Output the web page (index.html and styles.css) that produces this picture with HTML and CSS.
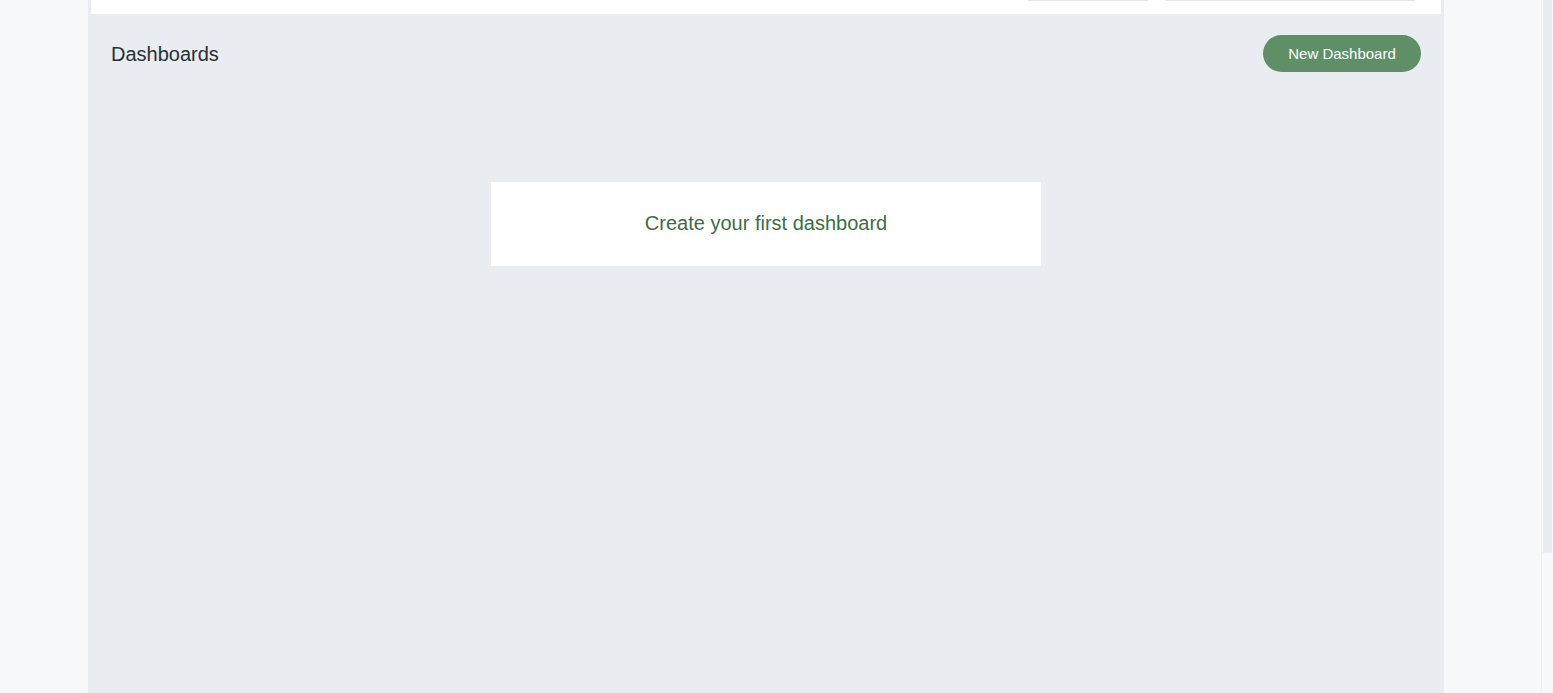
FILE: index.html
```html
<!DOCTYPE html>
<html lang="en">
<head>
  <meta charset="UTF-8">
  <meta name="viewport" content="width=device-width, initial-scale=1.0">
  <title>Dashboards</title>
  <link rel="stylesheet" href="styles.css">
</head>
<body>

  <div class="page">
    <div class="gutter"></div>

    <main class="panel">
      <div class="top-bar">
        <div class="field field-short"></div>
        <div class="field field-long"></div>
      </div>

      <div class="header-row">
        <h1 class="title">Dashboards</h1>
        <button class="btn">New Dashboard</button>
      </div>

      <div class="empty-card">
        <p>Create your first dashboard</p>
      </div>
    </main>

    <div class="gutter-right"></div>

    <div class="scrollbar">
      <div class="thumb"></div>
    </div>
  </div>

</body>
</html>
```

FILE: styles.css
```css
:root {
  --page-bg: #f7f8fa;
  --panel-bg: #e9ecf0;
  --green: #5f8f67;
  --green-text: #3f6b47;
  --ink: #283036;
}

* {
  box-sizing: border-box;
  margin: 0;
  padding: 0;
}

html, body {
  height: 100%;
  overflow: hidden;
}

body {
  font-family: 'Liberation Sans', Arial, sans-serif;
  background-color: var(--page-bg);
  color: var(--ink);
}

.page {
  display: flex;
  height: 100vh;
}

.gutter {
  width: 88px;
  flex-shrink: 0;
}

.gutter-right {
  flex: 1;
}

.panel {
  width: 1356px;
  flex-shrink: 0;
  background-color: var(--panel-bg);
  display: flex;
  flex-direction: column;
}

.top-bar {
  height: 14px;
  margin: 0 3px;
  background-color: #fff;
  display: flex;
  justify-content: flex-end;
  gap: 17px;
  padding-right: 26px;
}

.field {
  height: 1px;
  background-color: #e4e8ee;
}

.field-short {
  width: 120px;
}

.field-long {
  width: 250px;
}

.header-row {
  display: flex;
  align-items: center;
  justify-content: space-between;
  margin-top: 21px;
  padding: 0 23px;
  height: 37px;
}

.title {
  font-size: 20px;
  font-weight: 400;
  color: var(--ink);
  padding-top: 1px;
}

.btn {
  width: 158px;
  height: 37px;
  border: none;
  border-radius: 19px;
  background-color: var(--green);
  color: #fff;
  font-family: inherit;
  font-size: 15px;
  font-weight: 400;
  cursor: pointer;
}

.empty-card {
  width: 550px;
  height: 84px;
  margin: 110px auto 0;
  background-color: #fff;
  display: flex;
  align-items: center;
  justify-content: center;
}

.empty-card p {
  font-size: 20px;
  color: var(--green-text);
  padding-bottom: 1px;
}

.scrollbar {
  width: 12px;
  flex-shrink: 0;
  border-left: 1px solid #eceff3;
  padding: 0 1px 0 1px;
}

.thumb {
  height: 553px;
  background-color: #e9ecf1;
}
```
